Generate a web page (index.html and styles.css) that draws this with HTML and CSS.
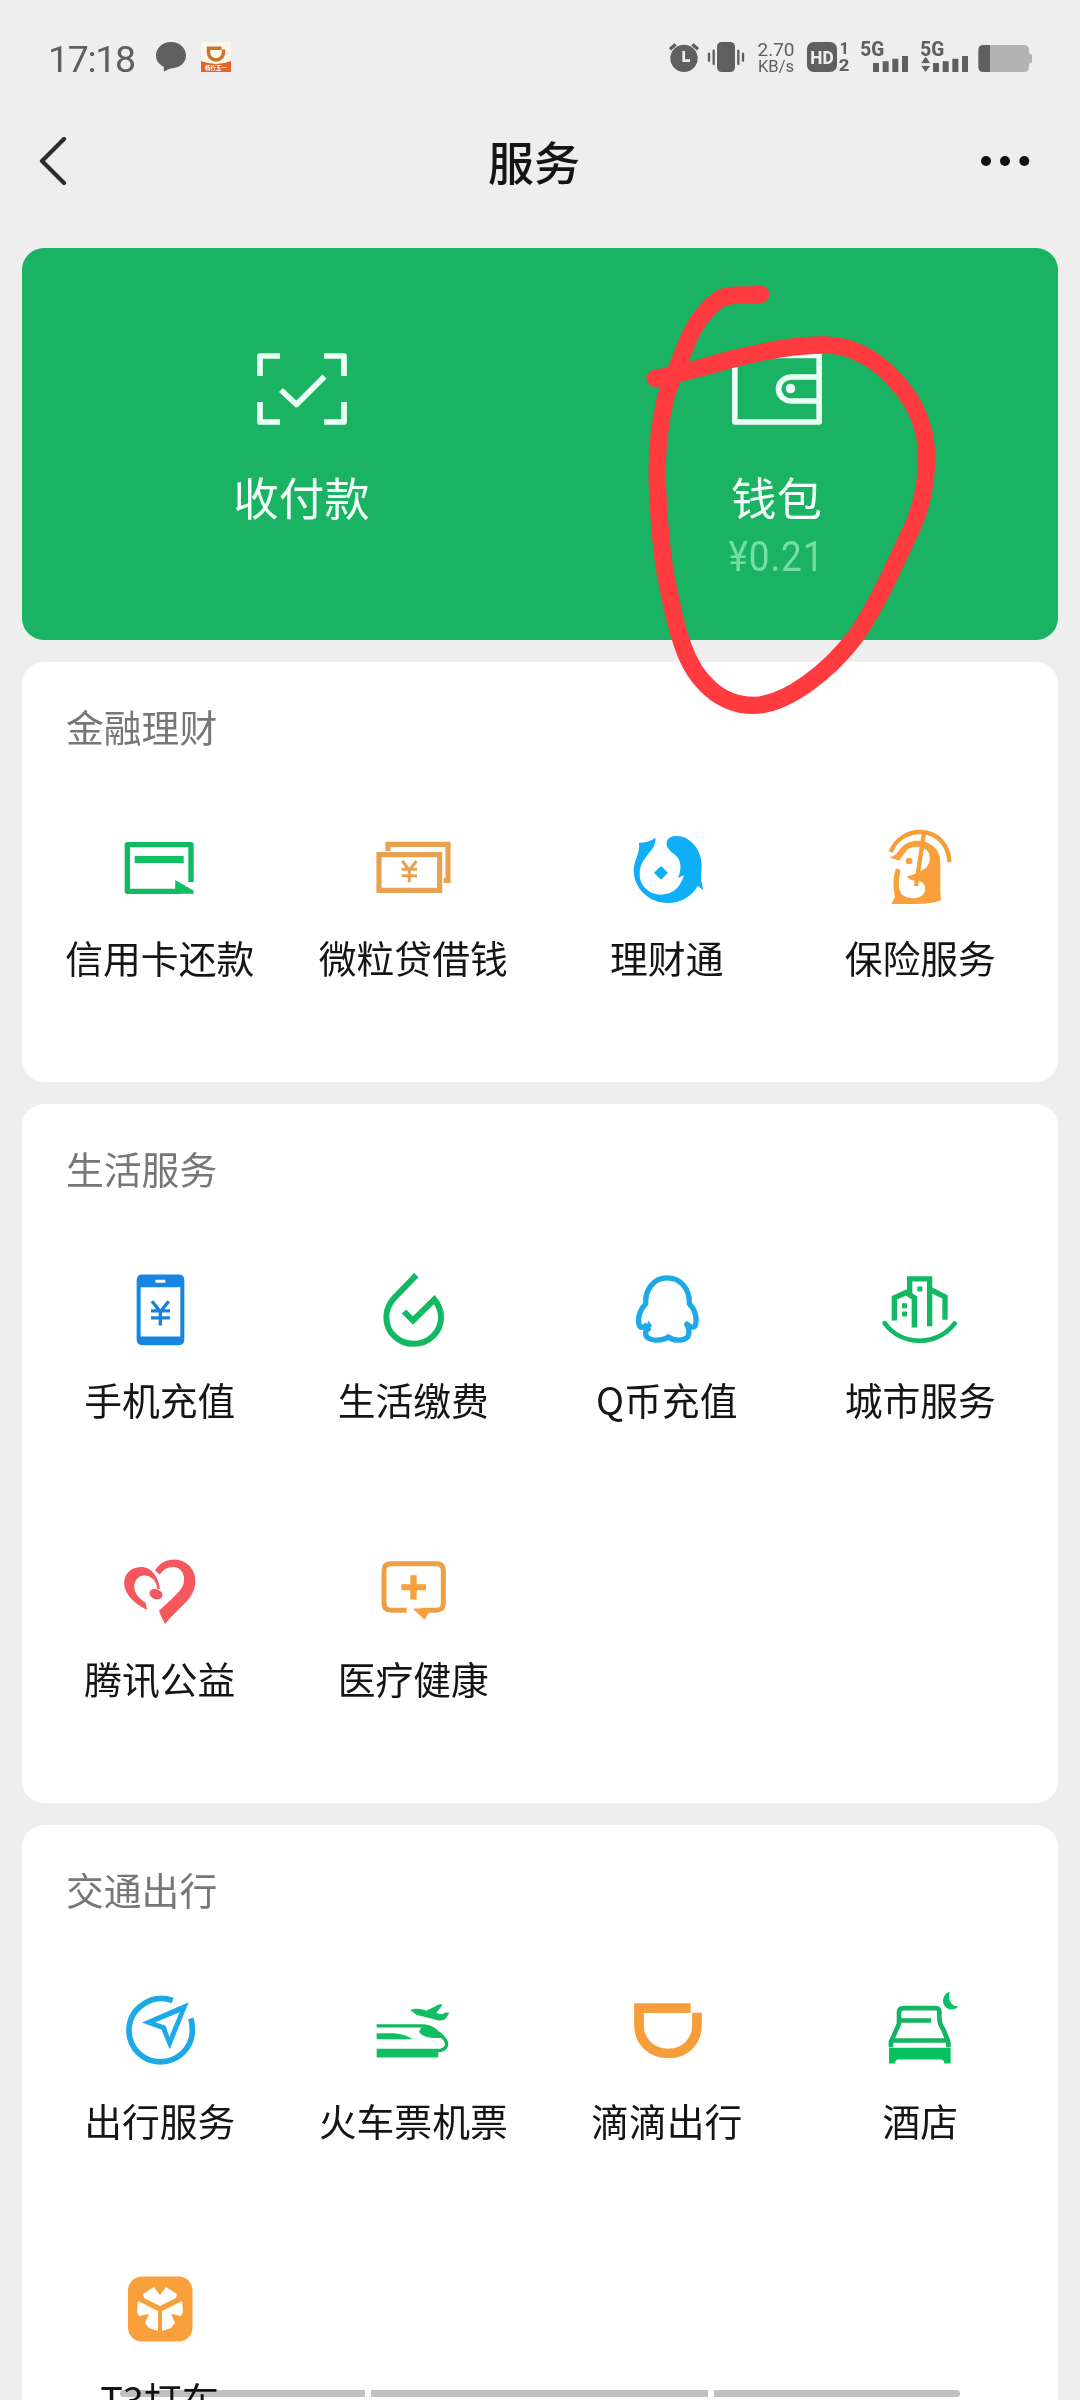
FILE: index.html
```html
<!DOCTYPE html>
<html lang="zh-CN">
<head>
<meta charset="utf-8">
<title>服务</title>
<link rel="stylesheet" href="styles.css">
</head>
<body>
<div class="screen">
  <header class="status">
    <div class="status-left">
      <span class="time">17:18</span>
      <svg class="bubble" viewBox="0 0 30 30"><path d="M15 0C23.500 0 30 6 30 13.500S23.500 26 15 26.500C13 27 10 28.500 8 29.500Q7.500 28 8 25C3 22.500 0 18.500 0 13.500C0 6 6.500 0 15 0Z"/></svg>
      <svg class="app" viewBox="0 0 30 30">
        <path fill="#fff6ea" d="M0 0H30V30H0Z"/>
        <path fill="#e2662a" d="M0 19Q15 25 30 19V30H0Z"/>
        <path fill="none" stroke="#c77432" stroke-width="3.400" d="M20.500 6.300H7.500V10.500A7.500 7.500 0 0 0 22.500 10.500V7.500"/>
        <text x="15" y="28" text-anchor="middle" font-size="5.500" font-weight="700" fill="#fff">畅行五一</text>
      </svg>
    </div>
    <div class="status-right">
      <svg width="36" height="36" viewBox="84 60 108 108"><circle cx="132" cy="115" r="41"/><path class="ink" stroke-width="10" d="M90 88L107 73M157 73L174 88"/><path fill="none" stroke="#eee" stroke-width="8" d="M131 93V122H150"/></svg>
      <svg width="48" height="36" viewBox="192 60 144 108"><rect x="231" y="66" width="54" height="90" rx="14"/><path class="ink" stroke-width="7" stroke-linecap="round" d="M207 101V122M221 92V132M295 92V132M309 101V122"/></svg>
      <div class="speed"><span>2.70</span><span>KB/s</span></div>
      <svg width="55" height="36" viewBox="480 60 165 108"><rect x="501" y="66" width="90" height="90" rx="20"/><text x="546" y="131" text-anchor="middle" class="bold" font-size="54" textLength="70" lengthAdjust="spacingAndGlyphs" fill="#eee">HD</text><text x="613" y="101" text-anchor="middle" class="bold" font-size="47">1</text><text x="612" y="153" text-anchor="middle" class="bold" font-size="49" textLength="32" lengthAdjust="spacingAndGlyphs">2</text></svg>
      <svg width="59" height="36" viewBox="645 60 177 108"><text x="661" y="108" class="bold" font-size="58" textLength="72" lengthAdjust="spacingAndGlyphs">5G</text><path class="ink" stroke-width="18" d="M708 129V156M737 124V156M766 116V156M795 108V156"/></svg>
      <svg width="58" height="36" viewBox="822 60 174 108"><text x="841" y="108" class="bold" font-size="58" textLength="72" lengthAdjust="spacingAndGlyphs">5G</text><path class="ink" stroke-width="18" d="M888 129V156M917 124V156M946 116V156M975 108V156"/><path stroke="#eee" stroke-width="3" d="M841 131L857 108L873 131ZM841 136H873L857 158Z"/></svg>
      <svg width="60" height="36" viewBox="996 60 180 108"><path fill="#b3b3b3" d="M1050 75H1152Q1167 75 1167 90V100L1176 104V127L1167 131V141Q1167 156 1152 156H1050Z"/><path d="M1030 75H1050V156H1030Q1015 156 1015 141V90Q1015 75 1030 75Z"/></svg>
    </div>
  </header>

  <nav class="nav">
    <svg class="back" viewBox="0 0 28 48"><path d="M25 2L3 24L25 46"/></svg>
    <h1>服务</h1>
    <svg class="more" viewBox="0 0 50 12"><circle cx="6" cy="6" r="5"/><circle cx="25" cy="6" r="5"/><circle cx="44.300" cy="6" r="5"/></svg>
  </nav>

  <main>
    <section class="pay">
      <div class="pay-item">
        <svg viewBox="0 0 90 72"><path d="M23 3H3V23M67 3H87V23M3 49V69H23M87 49V69H67M24 37L39.500 51.500L67.500 23.500"/></svg>
        <span class="pay-name">收付款</span>
      </div>
      <div class="pay-item">
        <svg viewBox="0 0 90 72"><path d="M2.800 2.500H87.200V69H2.800ZM87 24H59.500A13 12 0 0 0 59.500 48H87"/><circle cx="58.500" cy="35.500" r="4.800"/></svg>
        <span class="pay-name">钱包</span>
        <span class="balance">¥0.21</span>
      </div>
      <svg class="scribble" viewBox="120 50 920 1340"><path d="M482 102C430 106 385 98 355 118C290 165 262 240 240 300C220 350 205 380 195 420C175 510 168 600 173 690C178 800 185 890 202 970C218 1050 228 1100 250 1160C285 1260 360 1335 460 1335C560 1335 690 1230 765 1130C830 1040 890 900 935 805C965 740 980 670 980 590C980 510 950 430 890 365C830 295 750 250 660 254C570 256 480 275 410 293C320 316 240 342 165 354"/></svg>
    </section>

    <section class="card">
      <h2>金融理财</h2>
      <div class="grid">
        <div class="item">
          <svg class="green" viewBox="215 60 288 288"><path class="line" stroke-width="16" stroke-linejoin="round" d="M452 246V134H261V274H420"/><path d="M283 168H430V189H283ZM405 240L460 272V281H404Z"/></svg>
          <span>信用卡还款</span>
        </div>
        <div class="item">
          <svg class="tan" viewBox="976 60 288 288"><path class="line" stroke-width="15.500" d="M1018 164H1200V271H1018ZM1045 153V133H1225V241H1212"/><path class="line" stroke="#f29c38" stroke-width="9" d="M1088 183L1109 211L1130 183M1109 209V247M1086 208H1132M1086 227H1132"/></svg>
          <span>微粒贷借钱</span>
        </div>
        <div class="item">
          <svg class="sky" viewBox="176 60 288 288"><path d="M236 128Q265 128 286 113C286 147 262 158 248 184C228 220 238 264 278 280C312 292 350 276 362 247C366 240 369 234 370 226L353 234C365 205 363 182 345 165C325 150 314 136 320 122C330 104 362 105 380 116C410 134 424 166 424 198L422 240L429 271L412 257C395 290 360 309 322 309C265 308 220 265 220 210C221 180 240 160 236 128Z"/><path d="M302 198L323 218L302 239L281 218Z"/></svg>
          <span>理财通</span>
        </div>
        <div class="item">
          <svg class="orange" viewBox="937 60 288 288"><path class="line" stroke-width="13" d="M993 156C1008 117 1045 95 1084 96C1135 98 1169 137 1169 187M1093 98L1069 258"/><path fill-rule="evenodd" d="M988 171C1008 171 1014 155 1023 145C1043 121 1075 117 1101 127C1131 139 1142 162 1142 190V279L1144 301C1120 311 1090 312 1060 312H995L1006 291C1001 263 999 237 1008 208C1016 202 1025 210 1021 218C1015 246 1017 272 1027 284C1048 299 1081 299 1093 280C1101 267 1096 249 1080 244C1064 243 1048 241 1042 229C1060 226 1077 218 1093 208C1113 195 1116 163 1100 149C1082 136 1054 138 1041 151L1018 182Z"/><circle cx="1048" cy="183" r="10"/></svg>
          <span>保险服务</span>
        </div>
      </div>
    </section>

    <section class="card">
      <h2>生活服务</h2>
      <div class="grid">
        <div class="item">
          <svg class="blue" viewBox="215 64.500 288 288"><path fill-rule="evenodd" d="M306 102H415Q432 102 432 119V297Q432 314 415 314H306Q289 314 289 297V119Q289 102 306 102ZM301 140V288H420V140ZM345 118V127H375V118Z"/><path class="line" stroke-width="10" d="M335 182L360 214L385 182M360 212V255M332 211H389M332 232H389"/></svg>
          <span>手机充值</span>
        </div>
        <div class="item">
          <svg class="green" viewBox="976 64.500 288 288"><path class="line" stroke-width="18" d="M1130 104L1064 172C1048 190 1040 206 1040 230C1040 276 1077 310 1122 310C1167 310 1204 275 1204 230C1204 209 1197 193 1184 177L1120 240L1093 213"/></svg>
          <span>生活缴费</span>
        </div>
        <div class="item">
          <svg class="qq" viewBox="176 64.500 288 288"><path class="line" stroke-width="16" stroke-linejoin="round" d="M261 252C251 262 239 264 236 252C231 232 239 207 256 190C254 145 282 112 320 112C360 112 389 145 387 190C404 206 411 233 406 253C402 264 391 261 380 251C386 264 389 275 383 288C370 303 341 302 324 289C306 302 273 302 259 289C252 276 257 266 270 261"/><path d="M264 240L276 257L255 266ZM375 242L371 256L389 264Z"/></svg>
          <span>Q币充值</span>
        </div>
        <div class="item">
          <svg class="green" viewBox="937 64.500 288 288"><path class="line" stroke-width="16" d="M1004 240V172L1039 156L1064 172V261M1050 164V115H1110V257M1112 147L1156 169V238"/><path class="line" stroke-width="14" stroke-linecap="round" d="M975 248C1025 317 1130 319 1185 249"/><path d="M1027 188H1042V203H1027ZM1027 213H1042V228H1027ZM1073 138H1088V153H1073Z"/></svg>
          <span>城市服务</span>
        </div>
        <div class="item">
          <svg class="red" viewBox="215 31.500 288 288"><path d="M344 120C365 84 412 77 443 102C473 128 471 173 447 203C425 229 398 250 374 281C369 269 361 257 356 241C379 219 407 196 423 174C439 151 432 115 405 110C384 107 370 117 358 132Z"/><path d="M359 176C355 139 332 107 298 110C261 112 244 144 255 176C264 204 292 223 320 238L316 217C291 200 277 180 283 158C291 132 319 128 337 145C346 153 349 163 350 174Z"/><ellipse cx="347" cy="191" rx="20" ry="15" transform="rotate(18 347 191)"/></svg>
          <span>腾讯公益</span>
        </div>
        <div class="item">
          <svg class="orange" viewBox="976 31.500 288 288"><path class="line tan-line" stroke-width="15" d="M1101 239H1054Q1033 239 1033 219V120Q1033 100 1054 100H1190Q1211 100 1211 120V219Q1211 239 1190 239H1142"/><path d="M1112 134H1131V161H1159V179H1131V207H1112V179H1085V161H1112ZM1119 234H1175L1155 268Z"/></svg>
          <span>医疗健康</span>
        </div>
      </div>
    </section>

    <section class="card">
      <h2>交通出行</h2>
      <div class="grid">
        <div class="item">
          <svg class="qq" viewBox="215 67.500 288 288"><path class="line" stroke-width="17" d="M397 120C335 98 266 143 266 210C266 262 308 304 360 304C412 304 456 262 456 210C456 196 455 184 451 174"/><path fill-rule="evenodd" d="M445 125L388 267L364 208L305 186ZM418 155L345 185L376 196L387 229Z"/></svg>
          <span>出行服务</span>
        </div>
        <div class="item">
          <svg class="green" viewBox="976 67.500 288 288"><path d="M1011 218H1062C1085 219 1105 227 1120 236H1011ZM1011 265H1196V291H1011Z"/><path class="line" stroke-width="10" d="M1011 196H1146C1163 196 1176 200 1188 211C1204 223 1221 236 1221 251C1220 265 1207 271 1190 270"/><path d="M1145 201C1165 199 1180 205 1190 214C1197 222 1203 226 1210 232C1171 235 1145 228 1138 214ZM1112 149C1129 143 1142 144 1160 151L1186 138Q1201 128 1209 133L1189 158L1208 161Q1216 153 1229 157L1219 173Q1209 184 1185 177L1130 163Z"/></svg>
          <span>火车票机票</span>
        </div>
        <div class="item">
          <svg class="orange" viewBox="176 67.500 288 288"><path class="line" stroke-width="29" d="M391 143H236V193C236 244 273 279 324 279C374 279 410 244 410 193V157"/></svg>
          <span>滴滴出行</span>
        </div>
        <div class="item">
          <svg class="hotel" viewBox="937 67.500 288 288"><path class="line" stroke-width="14" d="M994 260V244L1018 190V157Q1018 143 1032 143H1127Q1141 143 1139 157C1138 185 1142 195 1151 207L1166 244V260M1022 180H1114M998 240H1163"/><path d="M988 262H1173V309H1154Q1154 298 1142 297H1017Q1006 298 1006 309H988ZM1170 93C1165 116 1171 135 1196 138C1184 152 1161 149 1152 132C1146 115 1155 99 1170 93Z"/></svg>
          <span>酒店</span>
        </div>
        <div class="item">
          <svg class="orange" viewBox="0 0 96 96"><rect x="16" y="14.500" width="64.500" height="65" rx="14"/><path fill="#fff" d="M48 33L54 25L65 32L64 36L48 44L32 36L31 32L42 25ZM26 39L46 49V69L37 66L33 61L37 52L27 54L25 50ZM70 39L50 49V69L59 66L63 61L59 52L69 54L71 50Z"/></svg>
          <span>T3打车</span>
        </div>
      </div>
    </section>
  </main>
  <div class="gesture"><i></i><i></i><i></i></div>
</div>
</body>
</html>
```
FILE: styles.css
```css
* { box-sizing: border-box; }

body {
  margin: 0;
  background: #eee;
  font-family: "Noto Sans CJK SC", sans-serif;
  color: #151515;
}

.screen {
  position: relative;
  width: 1080px;
  height: 2400px;
  overflow: hidden;
}

svg { display: block; flex: none; }

.status {
  display: flex;
  justify-content: space-between;
  height: 116px;
  padding: 40px 48px 0;
  color: #5f5f5f;
  fill: #5f5f5f;
}
.status svg { overflow: visible; }
.status-left { display: flex; height: 36px; }
.time {
  width: 108px;
  font: 37.5px/39px Roboto, sans-serif;
  letter-spacing: -1.3px;
}
.bubble { width: 30px; height: 30px; margin-top: 2px; }
.app { width: 30px; height: 30px; margin: 2px 0 0 15px; }
.status-right { display: flex; height: 36px; }
.speed {
  display: flex;
  flex-direction: column;
  align-items: center;
  width: 48px;
  font: 16.5px/16px Roboto, sans-serif;
}
.speed span:first-child { font-size: 19px; line-height: 19px; }
.ink { stroke: #5f5f5f; fill: none; }
.bold { font-family: Roboto, sans-serif; font-weight: 800; }

.nav {
  display: flex;
  align-items: center;
  justify-content: space-between;
  height: 90px;
  padding: 0 50px 0 39px;
}
.nav h1 {
  margin: -2px 0 0;
  padding-left: 21px;
  font-size: 46px;
  line-height: 60px;
  font-weight: 500;
}
.back { width: 28px; height: 48px; fill: none; stroke: #2c2c2c; stroke-width: 4.2; stroke-linecap: round; stroke-linejoin: round; }
.more { width: 50px; height: 12px; fill: #111; }

main {
  display: flex;
  flex-direction: column;
  gap: 22px;
  padding: 42px 22px 0;
}

.pay {
  position: relative;
  display: flex;
  height: 392px;
  padding: 105px 44px 0 42px;
  border-radius: 22px;
  background: #1ab263;
  color: #f1fff7;
}
.pay-item {
  display: flex;
  flex: 1;
  flex-direction: column;
  align-items: center;
}
.pay-item svg { width: 90px; height: 72px; stroke: #eafff4; stroke-width: 5.7; fill: none; stroke-linejoin: round; }
.pay-item circle { fill: #eafff4; stroke: none; }
.pay-name { margin-top: 41px; font-size: 45.5px; line-height: 60px; }
.balance {
  margin-top: 1px;
  font: 42px/60px Roboto, sans-serif;
  letter-spacing: 1px;
  color: #78dda4;
  transform: scaleX(.88);
}
.scribble {
  position: absolute;
  left: 618px;
  top: 29px;
  z-index: 1;
  width: 306.67px;
  height: 446.67px;
  fill: none;
  stroke: #ff3b40;
  stroke-width: 52;
  stroke-linecap: round;
  stroke-linejoin: round;
}

.card {
  padding: 0 11px;
  border-radius: 22px;
  background: #fff;
  margin-bottom: .5px;
}
.card h2 {
  margin: 0;
  height: 140.5px;
  padding: 39px 33px 0;
  font-size: 37.8px;
  line-height: 50px;
  font-weight: 400;
  color: #777;
}
.grid { display: grid; grid-template-columns: repeat(4, 1fr); grid-auto-rows: 279px; }
.item {
  display: flex;
  flex-direction: column;
  align-items: center;
  gap: 16px;
  padding-top: 17px;
  font-size: 37.8px;
  line-height: 50px;
  white-space: nowrap;
}
.item svg { width: 96px; height: 96px; }
.line { fill: none; stroke: currentColor; }
.green { color: #12b963; fill: #10bf62; }
.tan { color: #e5a253; }
.tan-line { stroke: #ed9f48; }
.sky { fill: #0eaef8; }
.orange { color: #f79d3a; fill: #f99f3b; }
.blue { color: #1a82dc; fill: #1785e2; }
.qq { color: #1ba9e8; fill: #1ba9e8; }
.red { fill: #f4585d; }
.hotel { color: #12b561; fill: #08c160; }

.gesture {
  position: absolute;
  left: 120px;
  right: 120px;
  top: 2390px;
  display: grid;
  grid-template-columns: 245px 337px 246px;
  gap: 6px;
  mix-blend-mode: multiply;
}
.gesture i { height: 7px; background: #c0c0c0; }
.gesture i:first-child { border-radius: 4px 0 0 4px; }
.gesture i:last-child { border-radius: 0 4px 4px 0; }
```
